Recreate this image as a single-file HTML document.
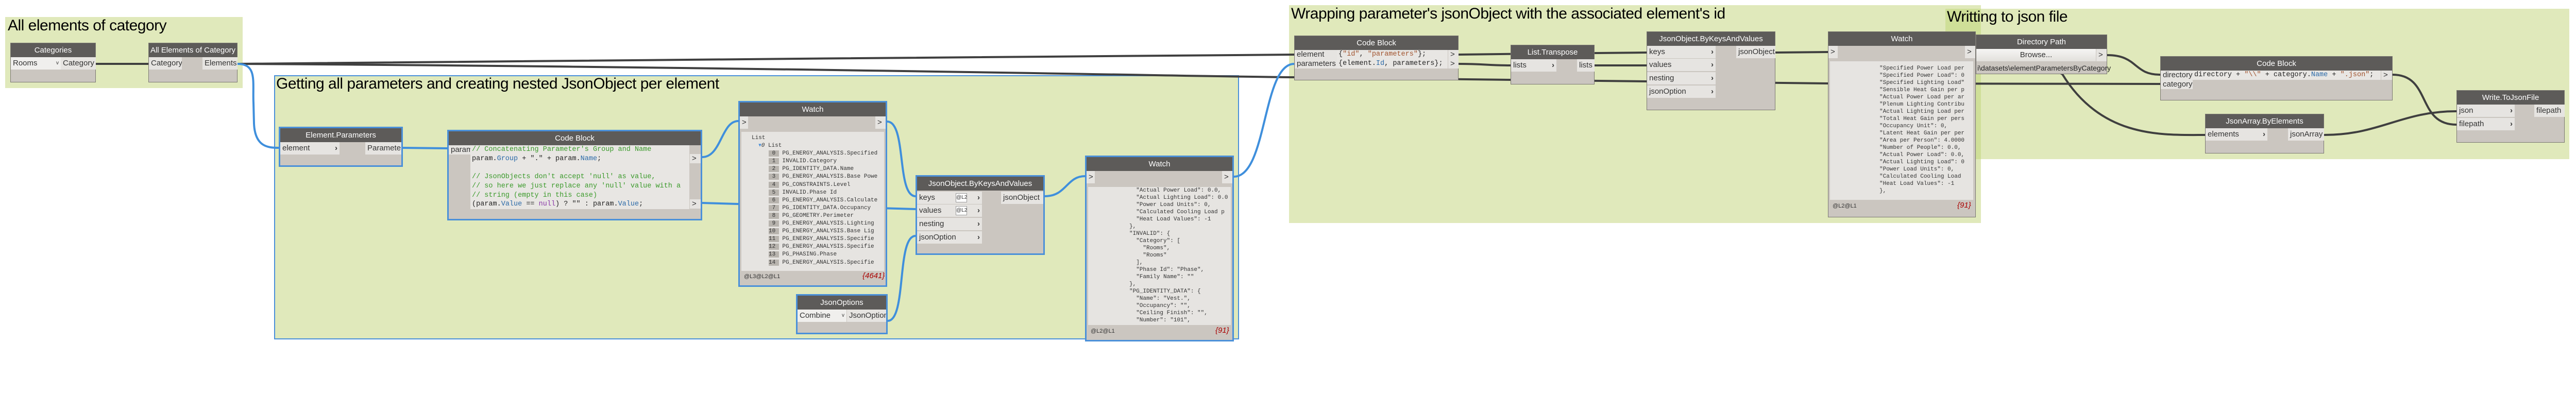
<!DOCTYPE html>
<html><head><meta charset="utf-8">
<style>
*{margin:0;padding:0;box-sizing:border-box}
body{width:5078px;height:798px;background:#fff;position:relative;overflow:hidden;font-family:"Liberation Sans Narrow","Liberation Sans",sans-serif;}
.g{position:absolute;background:#e0e9bb}
.gt{position:absolute;font-size:30px;color:#000;white-space:nowrap;letter-spacing:-0.5px}
.n{position:absolute;background:#cbc6c0;border:1px solid #7a7772}
.sel{border:3px solid #4a90d9}
.h{background:#5d5b59;color:#fff;text-align:center;font-size:15px;height:27px;line-height:27px;white-space:nowrap;overflow:hidden}
.p{position:absolute;background:#e6e4e1;color:#333;font-size:15px;height:24px;line-height:24px;padding-left:4px;white-space:nowrap;overflow:hidden}
.ar{position:absolute;right:4px;top:0;font-weight:bold;color:#333}
.mono{font-family:"Liberation Mono",monospace}
.code{position:absolute;background:#e8e6e3;font-family:"Liberation Mono",monospace;font-size:13.5px;line-height:17.7px;color:#222;white-space:pre;overflow:hidden;padding-left:3px}
.cm{color:#3a9a2a}.bl{color:#2b6aa8}.pu{color:#8a3aa8}.st{color:#a0522d}
.lst{position:absolute;background:#e6e4e1;font-family:"Liberation Mono",monospace;font-size:11px;color:#333;white-space:pre;overflow:hidden}
.ft{position:absolute;font-size:11px;color:#333}
.cnt{position:absolute;color:#a00;font-style:italic;font-size:15px}
</style></head><body>
<!-- groups -->
<div class="g" style="left:10px;top:33px;width:461px;height:138px"></div>
<div class="gt" style="left:15px;top:33px">All elements of category</div>
<div class="g" style="left:532px;top:146px;width:1873px;height:513px;border:2px solid #4a90d9"></div>
<div class="gt" style="left:536px;top:146px">Getting all parameters and creating nested JsonObject per element</div>
<div class="g" style="left:2502px;top:10px;width:1343px;height:423px"></div>
<div class="gt" style="left:2506px;top:10px">Wrapping parameter's jsonObject with the associated element's id</div>
<div class="g" style="left:3776px;top:17px;width:1211px;height:292px"></div>
<div style="position:absolute;left:3776px;top:17px;width:69px;height:292px;background:#cfdf98"></div>
<div class="gt" style="left:3779px;top:16px">Writting to json file</div>

<svg style="position:absolute;left:0;top:0" width="5078" height="798">
<g fill="none" stroke="#3f3f3f" stroke-width="4">
<path d="M461 124 C1200 124 1800 106 2512 106"/>
<path d="M461 124 C1500 130 2400 150 2512 150 L2932 155 L3196 158 L3548 162 L4193 163"/>
<path d="M2831 106 C2900 106 3100 102 3196 102"/>
<path d="M2831 124 C2880 124 2890 127 2932 127"/>
<path d="M3095 127 L3196 127"/>
<path d="M3446 102 L3548 101"/>
<path d="M4090 107 C4150 107 4140 145 4193 145"/>
<path d="M3835 101 C3980 101 3990 140 4003 144 C4080 270 4200 262 4280 262"/>
<path d="M4644 145 C4720 145 4690 242 4768 242"/>
<path d="M4511 262 C4620 262 4660 216 4768 216"/>
<path d="M186 124 L288 124"/>
</g>
<g fill="none" stroke="#3f8fdc" stroke-width="4">
<path d="M461 124 C500 124 490 160 492 200 L493 240 C495 285 520 287 541 287"/>
<path d="M782 287 L868 288"/>
<path d="M1363 305 C1400 305 1400 235 1433 235"/>
<path d="M1363 394 L1777 406"/>
<path d="M1722 236 C1760 236 1740 381 1777 381"/>
<path d="M1723 623 C1760 623 1740 458 1777 458"/>
<path d="M2028 381 C2070 381 2070 342 2106 342"/>
<path d="M2395 343 C2460 343 2450 124 2512 124"/>
</g>
</svg>

<!-- Categories -->
<div class="n" style="left:20px;top:83px;width:166px;height:77px"><div class="h">Categories</div>
<div class="p" style="left:0;top:27px;width:97px;background:#f0efed">Rooms<span class="ar" style="font-weight:normal;font-size:10px">v</span></div>
<div class="p" style="left:97px;top:27px;width:68px">Category</div></div>
<!-- All Elements -->
<div class="n" style="left:288px;top:83px;width:173px;height:77px"><div class="h">All Elements of Category</div>
<div class="p" style="left:0;top:27px;width:64px">Category</div>
<div class="p" style="left:104px;top:27px;width:68px">Elements</div></div>
<!-- Element.Parameters -->
<div class="n sel" style="left:541px;top:246px;width:241px;height:78px"><div class="h">Element.Parameters</div>
<div class="p" style="left:0;top:27px;width:115px">element<span class="ar">›</span></div>
<div class="p" style="left:165px;top:27px;width:70px">Parameter[]</div></div>
<!-- Code Block 1 -->
<div class="n sel" style="left:868px;top:252px;width:495px;height:176px"><div class="h">Code Block</div>
<div class="p" style="left:0;top:27px;width:42px;height:18px;line-height:18px">param</div>
<div class="code" style="left:42px;top:27px;width:425px;height:124px"><span class="cm">// Concatenating Parameter's Group and Name</span>
param.<span class="bl">Group</span> + "." + param.<span class="bl">Name</span>;

<span class="cm">// JsonObjects don't accept 'null' as value,</span>
<span class="cm">// so here we just replace any 'null' value with a</span>
<span class="cm">// string (empty in this case)</span>
(param.<span class="bl">Value</span> == <span class="pu">null</span>) ? "" : param.<span class="bl">Value</span>;</div>
<div class="p" style="left:468px;top:44px;width:21px;height:18px;line-height:18px">&gt;</div>
<div class="p" style="left:468px;top:132px;width:21px;height:18px;line-height:18px">&gt;</div></div>
<!-- Watch 1 -->
<div class="n sel" style="left:1433px;top:196px;width:289px;height:361px"><div class="h">Watch</div>
<div class="p" style="left:0;top:27px;width:16px">&gt;</div>
<div class="p" style="left:263px;top:27px;width:20px">&gt;</div>
<div class="lst" style="left:3px;top:57px;width:277px;height:270px;line-height:15.1px;padding:5px 0 0 20px">List
  <span style="color:#4a90d9">▾</span><i>0</i> List
     <span style="background:#b8b4ae"> 0 </span> PG_ENERGY_ANALYSIS.Specified
     <span style="background:#b8b4ae"> 1 </span> INVALID.Category
     <span style="background:#b8b4ae"> 2 </span> PG_IDENTITY_DATA.Name
     <span style="background:#b8b4ae"> 3 </span> PG_ENERGY_ANALYSIS.Base Powe
     <span style="background:#b8b4ae"> 4 </span> PG_CONSTRAINTS.Level
     <span style="background:#b8b4ae"> 5 </span> INVALID.Phase Id
     <span style="background:#b8b4ae"> 6 </span> PG_ENERGY_ANALYSIS.Calculate
     <span style="background:#b8b4ae"> 7 </span> PG_IDENTITY_DATA.Occupancy
     <span style="background:#b8b4ae"> 8 </span> PG_GEOMETRY.Perimeter
     <span style="background:#b8b4ae"> 9 </span> PG_ENERGY_ANALYSIS.Lighting
     <span style="background:#b8b4ae">10 </span> PG_ENERGY_ANALYSIS.Base Lig
     <span style="background:#b8b4ae">11 </span> PG_ENERGY_ANALYSIS.Specifie
     <span style="background:#b8b4ae">12 </span> PG_ENERGY_ANALYSIS.Specifie
     <span style="background:#b8b4ae">13 </span> PG_PHASING.Phase
     <span style="background:#b8b4ae">14 </span> PG_ENERGY_ANALYSIS.Specifie</div>
<div class="ft" style="left:8px;top:332px">@L3@L2@L1</div><div class="cnt" style="left:238px;top:328px">{4641}</div></div>
<!-- JsonObject 1 -->
<div class="n sel" style="left:1777px;top:340px;width:251px;height:155px"><div class="h">JsonObject.ByKeysAndValues</div>
<div class="p" style="left:0;top:29px;width:126px">keys<span style="position:absolute;left:75px;top:3px;width:22px;height:18px;background:#fff;border:1px solid #999;font-size:10px;line-height:16px">@L2</span><span class="ar">›</span></div>
<div class="p" style="left:0;top:54px;width:126px">values<span style="position:absolute;left:75px;top:3px;width:22px;height:18px;background:#fff;border:1px solid #999;font-size:10px;line-height:16px">@L2</span><span class="ar">›</span></div>
<div class="p" style="left:0;top:80px;width:126px">nesting<span class="ar">›</span></div>
<div class="p" style="left:0;top:106px;width:126px">jsonOption<span class="ar">›</span></div>
<div class="p" style="left:163px;top:29px;width:82px">jsonObject</div></div>
<!-- JsonOptions -->
<div class="n sel" style="left:1545px;top:571px;width:178px;height:78px"><div class="h">JsonOptions</div>
<div class="p" style="left:0;top:27px;width:95px;background:#f0efed">Combine<span class="ar" style="font-weight:normal;font-size:10px">v</span></div>
<div class="p" style="left:96px;top:27px;width:76px">JsonOption</div></div>
<!-- Watch 2 -->
<div class="n sel" style="left:2106px;top:302px;width:289px;height:361px"><div class="h">Watch</div>
<div class="p" style="left:0;top:27px;width:16px">&gt;</div>
<div class="p" style="left:263px;top:27px;width:20px">&gt;</div>
<div class="lst" style="left:3px;top:58px;width:277px;height:268px;line-height:14px;padding:0 0 0 80px">  "Actual Power Load": 0.0,
  "Actual Lighting Load": 0.0
  "Power Load Units": 0,
  "Calculated Cooling Load p
  "Heat Load Values": -1
},
"INVALID": {
  "Category": [
    "Rooms",
    "Rooms"
  ],
  "Phase Id": "Phase",
  "Family Name": ""
},
"PG_IDENTITY_DATA": {
  "Name": "Vest.",
  "Occupancy": "",
  "Ceiling Finish": "",
  "Number": "101",</div>
<div class="ft" style="left:8px;top:332px">@L2@L1</div><div class="cnt" style="left:250px;top:328px">{91}</div></div>
<!-- Code Block 2 -->
<div class="n" style="left:2512px;top:69px;width:319px;height:87px"><div class="h">Code Block</div>
<div class="p" style="left:0;top:27px;width:82px;height:18px;line-height:18px">element</div>
<div class="p" style="left:0;top:45px;width:82px;height:18px;line-height:18px">parameters</div>
<div class="code" style="left:82px;top:27px;width:215px;height:36px;line-height:18px">{<span class="st">"id"</span>, <span class="st">"parameters"</span>};
{element.<span class="bl">Id</span>, parameters};</div>
<div class="p" style="left:298px;top:27px;width:20px;height:18px;line-height:18px">&gt;</div>
<div class="p" style="left:298px;top:45px;width:20px;height:18px;line-height:18px">&gt;</div></div>
<!-- List.Transpose -->
<div class="n" style="left:2932px;top:87px;width:163px;height:77px"><div class="h">List.Transpose</div>
<div class="p" style="left:0;top:27px;width:88px">lists<span class="ar">›</span></div>
<div class="p" style="left:128px;top:27px;width:34px">lists</div></div>
<!-- JsonObject 2 -->
<div class="n" style="left:3196px;top:61px;width:250px;height:153px"><div class="h">JsonObject.ByKeysAndValues</div>
<div class="p" style="left:0;top:27px;width:133px">keys<span class="ar">›</span></div>
<div class="p" style="left:0;top:52px;width:133px">values<span class="ar">›</span></div>
<div class="p" style="left:0;top:78px;width:133px">nesting<span class="ar">›</span></div>
<div class="p" style="left:0;top:104px;width:133px">jsonOption<span class="ar">›</span></div>
<div class="p" style="left:173px;top:27px;width:76px">jsonObject</div></div>
<!-- Watch 3 -->
<div class="n" style="left:3548px;top:61px;width:287px;height:361px"><div class="h">Watch</div>
<div class="p" style="left:0;top:27px;width:18px">&gt;</div>
<div class="p" style="left:265px;top:27px;width:20px">&gt;</div>
<div class="lst" style="left:3px;top:57px;width:278px;height:269px;line-height:14px;padding:7px 0 0 96px">"Specified Power Load per
"Specified Power Load": 0
"Specified Lighting Load"
"Sensible Heat Gain per p
"Actual Power Load per ar
"Plenum Lighting Contribu
"Actual Lighting Load per
"Total Heat Gain per pers
"Occupancy Unit": 0,
"Latent Heat Gain per per
"Area per Person": 4.0000
"Number of People": 0.0,
"Actual Power Load": 0.0,
"Actual Lighting Load": 0
"Power Load Units": 0,
"Calculated Cooling Load
"Heat Load Values": -1
},</div>
<div class="ft" style="left:8px;top:332px">@L2@L1</div><div class="cnt" style="left:250px;top:328px">{91}</div></div>
<!-- Directory Path -->
<div class="n" style="left:3835px;top:67px;width:255px;height:77px"><div class="h">Directory Path</div>
<div class="p" style="left:0;top:27px;width:232px;background:linear-gradient(#f6f5f3,#e2e0dc);text-align:center;padding:0">Browse...</div>
<div class="p" style="left:233px;top:27px;width:20px">&gt;</div>
<div style="position:absolute;left:2px;top:56px;font-size:14px;color:#222;white-space:nowrap">i\datasets\elementParametersByCategory</div></div>
<!-- Code Block 3 -->
<div class="n" style="left:4193px;top:109px;width:451px;height:86px"><div class="h">Code Block</div>
<div class="p" style="left:0;top:27px;width:62px;height:18px;line-height:18px">directory</div>
<div class="p" style="left:0;top:45px;width:62px;height:18px;line-height:18px">category</div>
<div class="code" style="left:62px;top:27px;width:365px;height:18px;line-height:18px">directory + <span class="st">"\\"</span> + category.<span class="bl">Name</span> + <span class="st">".json"</span>;</div>
<div class="p" style="left:428px;top:27px;width:21px;height:18px;line-height:18px">&gt;</div></div>
<!-- JsonArray.ByElements -->
<div class="n" style="left:4280px;top:221px;width:231px;height:77px"><div class="h">JsonArray.ByElements</div>
<div class="p" style="left:0;top:27px;width:120px">elements<span class="ar">›</span></div>
<div class="p" style="left:160px;top:27px;width:70px">jsonArray</div></div>
<!-- Write.ToJsonFile -->
<div class="n" style="left:4768px;top:175px;width:210px;height:102px"><div class="h">Write.ToJsonFile</div>
<div class="p" style="left:0;top:27px;width:112px">json<span class="ar">›</span></div>
<div class="p" style="left:0;top:53px;width:112px">filepath<span class="ar">›</span></div>
<div class="p" style="left:150px;top:27px;width:59px">filepath</div></div>
</body></html>
